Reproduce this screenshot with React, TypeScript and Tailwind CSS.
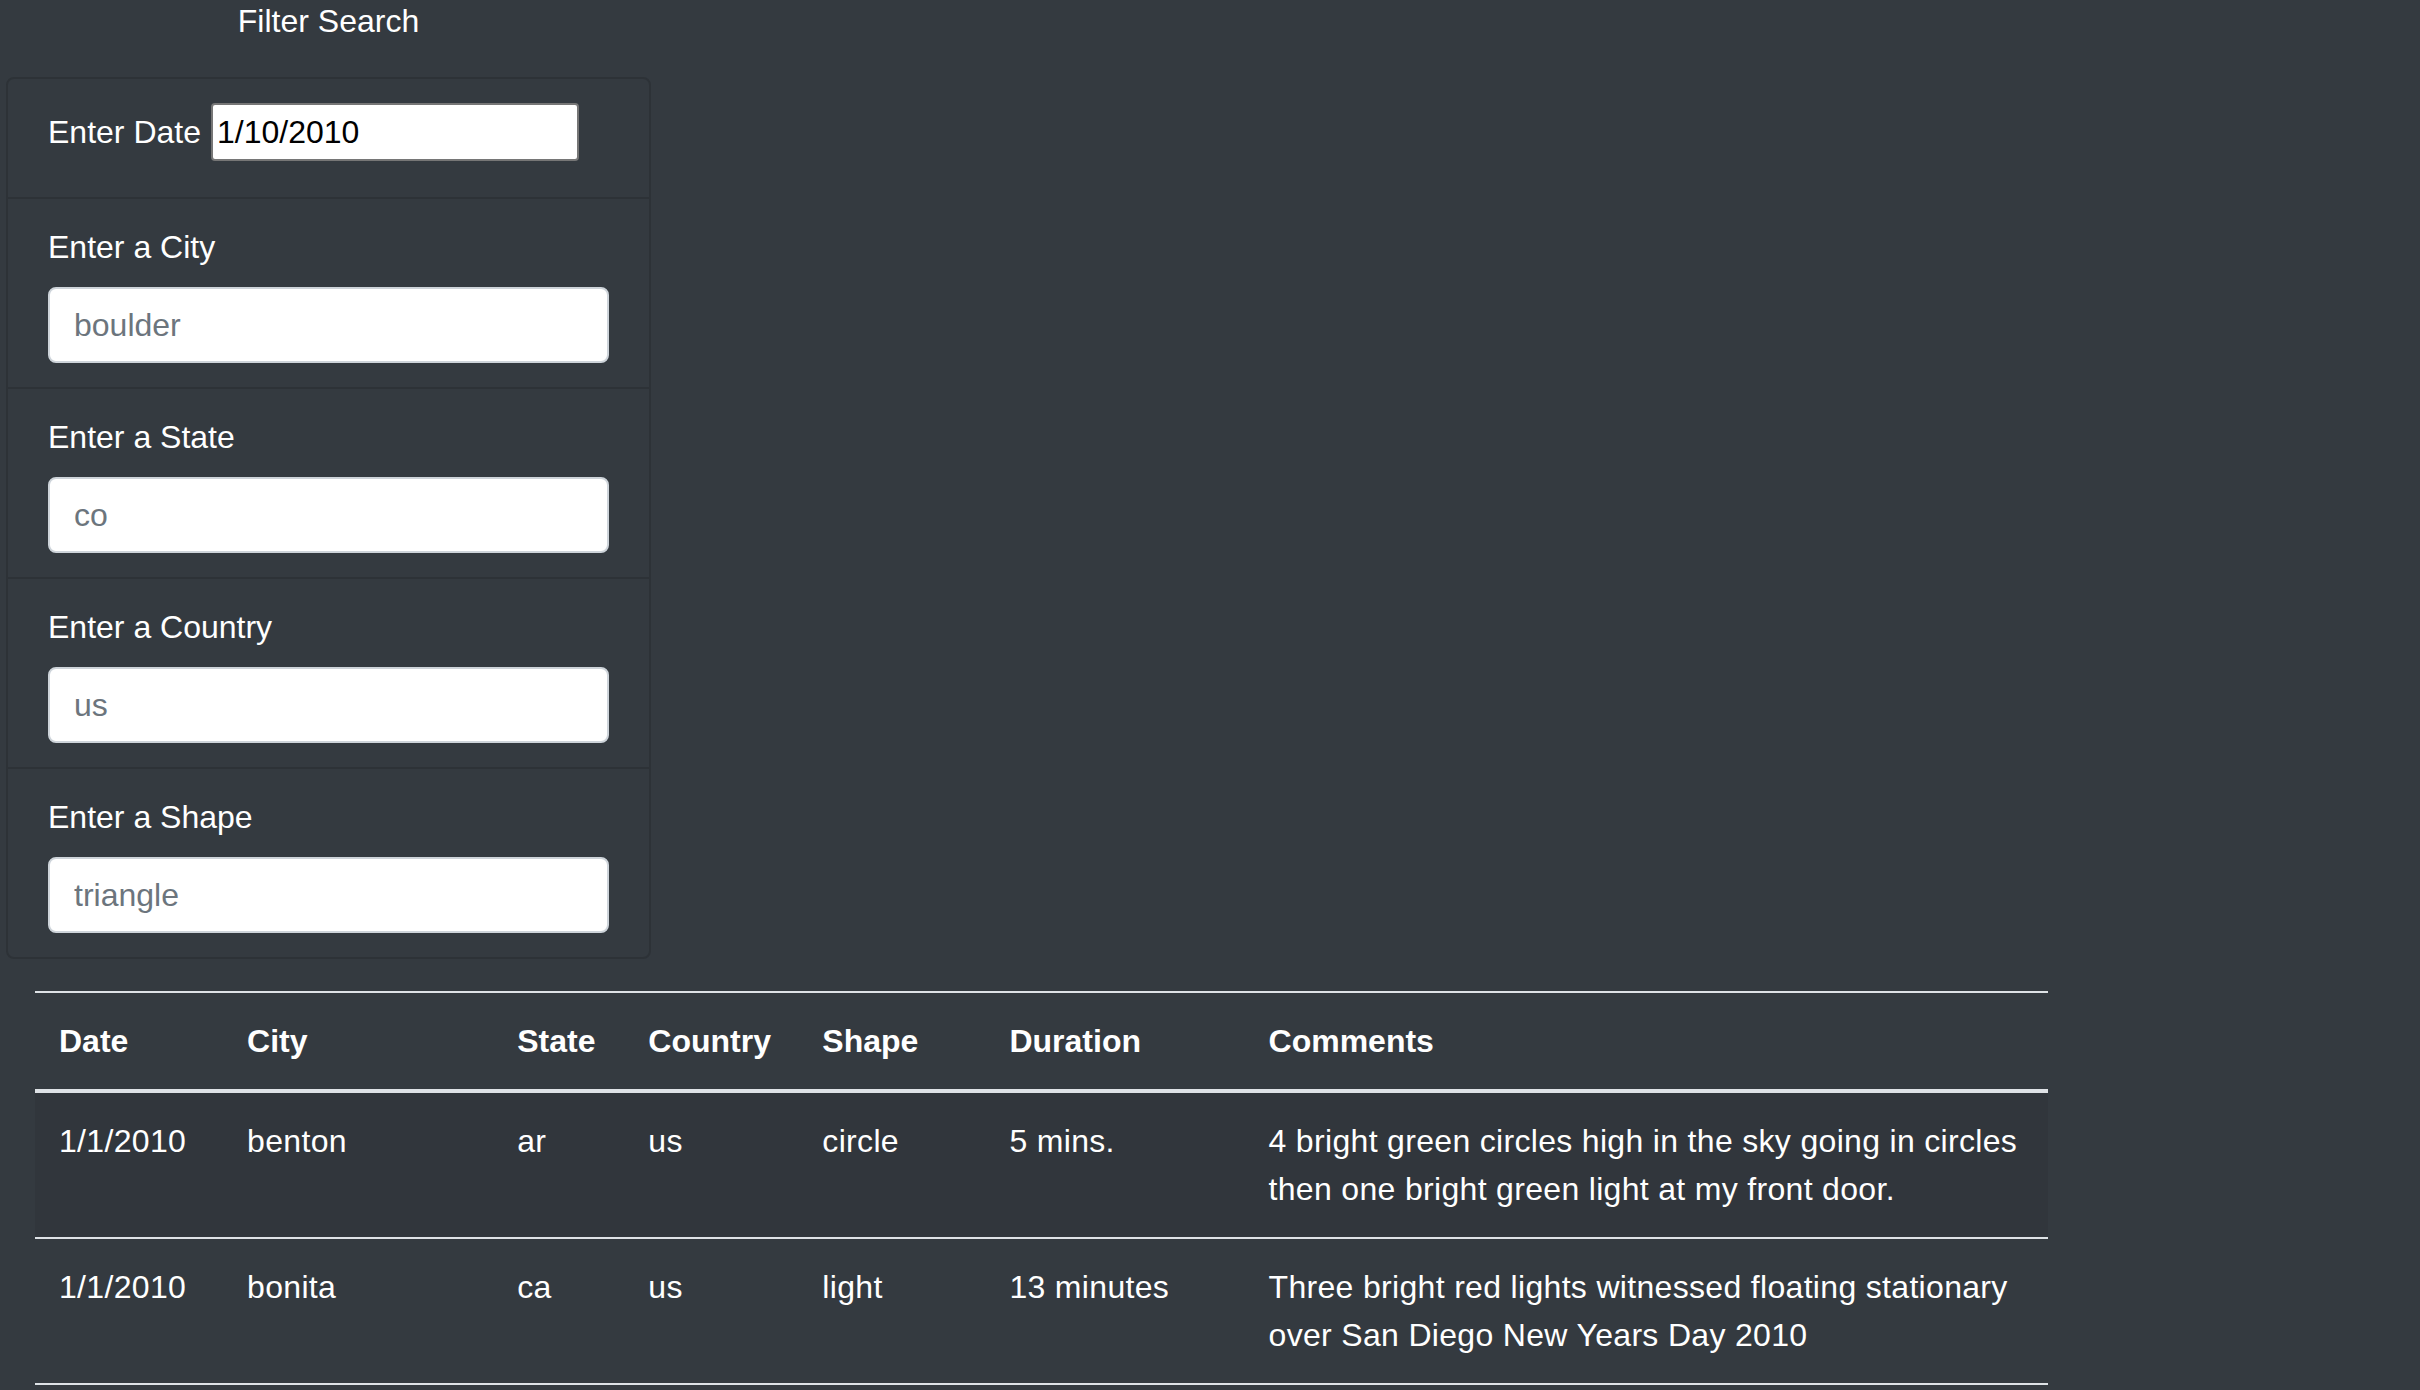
const filters = [
  { label: "Enter a City", placeholder: "boulder" },
  { label: "Enter a State", placeholder: "co" },
  { label: "Enter a Country", placeholder: "us" },
  { label: "Enter a Shape", placeholder: "triangle" },
];

const columns = [
  { name: "Date", width: 188 },
  { name: "City", width: 270 },
  { name: "State", width: 131 },
  { name: "Country", width: 174 },
  { name: "Shape", width: 187 },
  { name: "Duration", width: 259 },
  { name: "Comments", width: 803 },
];

const sightings = [
  {
    date: "1/1/2010",
    city: "benton",
    state: "ar",
    country: "us",
    shape: "circle",
    duration: "5 mins.",
    comments:
      "4 bright green circles high in the sky going in circles then one bright green light at my front door.",
  },
  {
    date: "1/1/2010",
    city: "bonita",
    state: "ca",
    country: "us",
    shape: "light",
    duration: "13 minutes",
    comments:
      "Three bright red lights witnessed floating stationary over San Diego New Years Day 2010",
  },
];

export default function App() {
  return (
    <div className="min-h-screen bg-[#343a40] font-['Liberation_Sans',Arial,sans-serif] text-[32px] leading-[48px] text-white">
      <div className="ml-[6px] w-[645px]">
        <h3 className="-mt-[3px] pb-[32px] text-center font-normal">Filter Search</h3>
        <ul className="overflow-hidden rounded-[8px] border-2 border-[#2d3237]">
          <li className="px-[40px] py-[24px]">
            <div className="flex h-[70px] items-baseline gap-[10px]">
              <label htmlFor="datetime">Enter Date</label>
              <input
                id="datetime"
                type="text"
                value="1/10/2010"
                readOnly
                className="h-[58px] w-[368px] rounded-[4px] border-2 border-[#767676] bg-white px-[4px] py-[3px] text-black outline-none"
              />
            </div>
          </li>
          {filters.map((f) => (
            <li
              key={f.label}
              className="border-t-2 border-[#2d3237] px-[40px] py-[24px]"
            >
              <label className="mb-[16px] block">{f.label}</label>
              <input
                type="text"
                placeholder={f.placeholder}
                className="block h-[76px] w-full rounded-[8px] border-2 border-[#ced4da] bg-white px-[24px] text-[#495057] outline-none placeholder:text-[#6c757d]"
              />
            </li>
          ))}
        </ul>
      </div>

      <div className="pl-[35px] pt-[32px] pb-[40px]">
        <table className="w-[2013px] table-fixed border-collapse text-left">
          <colgroup>
            {columns.map((c) => (
              <col key={c.name} style={{ width: c.width }} />
            ))}
          </colgroup>
          <thead>
            <tr>
              {columns.map((c) => (
                <th
                  key={c.name}
                  className="border-t-2 border-b-4 border-[#dee2e6] p-[24px] align-bottom font-bold"
                >
                  {c.name}
                </th>
              ))}
            </tr>
          </thead>
          <tbody>
            {sightings.map((s, i) => (
              <tr
                key={i}
                className={i % 2 === 0 ? "bg-[#31363c]" : "bg-transparent"}
              >
                {[s.date, s.city, s.state, s.country, s.shape, s.duration, s.comments].map(
                  (v, j) => (
                    <td
                      key={j}
                      className="border-t-2 border-b-2 border-[#dee2e6] p-[24px] align-top tracking-[0.01em]"
                    >
                      {v}
                    </td>
                  )
                )}
              </tr>
            ))}
          </tbody>
        </table>
      </div>
    </div>
  );
}
